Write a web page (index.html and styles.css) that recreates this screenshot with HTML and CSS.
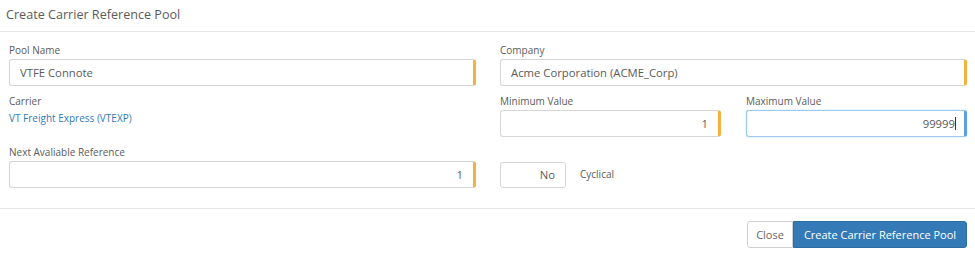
FILE: index.html
```html
<!DOCTYPE html>
<html>
<head>
<meta charset="utf-8">
<link rel="stylesheet" href="styles.css">
</head>
<body>
<div class="modal">
  <div class="modal-header">Create Carrier Reference Pool</div>
  <div class="modal-body">
    <div class="grid">
      <div class="fg">
        <div class="label">Pool Name</div>
        <div class="input req">VTFE Connote</div>
      </div>
      <div class="fg">
        <div class="label">Company</div>
        <div class="input req">Acme Corporation (ACME_Corp)</div>
      </div>
      <div class="fg">
        <div class="label">Carrier</div>
        <a class="link">VT Freight Express (VTEXP)</a>
      </div>
      <div class="subgrid">
        <div class="fg">
          <div class="label">Minimum Value</div>
          <div class="input req right">1</div>
        </div>
        <div class="fg">
          <div class="label">Maximum Value</div>
          <div class="input focus right">99999<span class="caret"></span></div>
        </div>
      </div>
      <div class="fg">
        <div class="label">Next Avaliable Reference</div>
        <div class="input req right">1</div>
      </div>
      <div class="toggle-row">
        <div class="toggle">No</div>
        <span class="toggle-label">Cyclical</span>
      </div>
    </div>
  </div>
  <div class="modal-footer">
    <button class="btn btn-default">Close</button><button class="btn btn-primary">Create Carrier Reference Pool</button>
  </div>
</div>
</body>
</html>
```
FILE: styles.css
```css
* { box-sizing: border-box; }
html, body { margin: 0; padding: 0; background: #fff; }
body {
  font-family: "Open Sans", "Noto Sans", sans-serif;
  color: #5a5a5a;
  width: 975px;
  height: 254px;
  overflow: hidden;
}
.modal-header {
  height: 32px;
  padding: 6px 0 0 6px;
  font-size: 12.6px;
  line-height: 17px;
  color: #5a5a5a;
  border-bottom: 1px solid #e8e8e8;
}
.modal-body {
  padding: 11px 8px 20px 9px;
  border-bottom: 1px solid #e5e5e5;
}
.grid {
  display: grid;
  grid-template-columns: 467px 467px;
  column-gap: 24px;
  row-gap: 8px;
}
.subgrid {
  display: grid;
  grid-template-columns: 221px 221px;
  column-gap: 25px;
}
.fg { display: flex; flex-direction: column; }
.label {
  font-size: 10px;
  line-height: 14px;
  height: 14px;
  margin-bottom: 2px;
  color: #5a5a5a;
}
.input {
  height: 27px;
  border: 1px solid #d6d6d6;
  border-radius: 3px;
  padding: 0 10px;
  font-size: 11.3px;
  line-height: 25px;
  color: #5a5a5a;
  background: #fff;
}
.input.req { border-right: 3px solid #f4b13e; }
.input.right { text-align: right; }
.input.focus {
  border: 1px solid #9ecaf0;
  border-right: 3px solid #5fa0dc;
  box-shadow: 0 0 2px rgba(102, 175, 233, 0.4);
  padding-right: 8px;
}
.caret {
  display: inline-block;
  width: 1px;
  height: 13px;
  background: #333;
  vertical-align: -2px;
}
.link {
  font-size: 10px;
  line-height: 14px;
  color: #337ab7;
  margin-top: 1px;
}
.toggle-row {
  display: flex;
  align-items: center;
  gap: 14px;
  padding-top: 17px;
}
.toggle {
  width: 66px;
  height: 26px;
  border: 1px solid #d6d6d6;
  border-radius: 3px;
  text-align: right;
  padding-right: 10px;
  font-size: 11.3px;
  line-height: 24px;
  color: #5a5a5a;
}
.toggle-label {
  font-size: 10px;
  color: #5a5a5a;
  margin-top: -3px;
}
.modal-footer {
  display: flex;
  justify-content: flex-end;
  padding: 12px 8px 0 0;
}
.btn {
  height: 27px;
  font-family: "Open Sans", "Noto Sans", sans-serif;
  font-size: 11px;
  line-height: 25px;
  padding: 0;
  margin: 0;
  cursor: pointer;
}
.btn-default {
  width: 46px;
  background: #fff;
  color: #666;
  border: 1px solid #d0d0d0;
  border-radius: 3px 0 0 3px;
}
.btn-primary {
  width: 174px;
  background: #337ab7;
  color: #fff;
  border: 1px solid #2e6da4;
  border-radius: 0 3px 3px 0;
}
```
